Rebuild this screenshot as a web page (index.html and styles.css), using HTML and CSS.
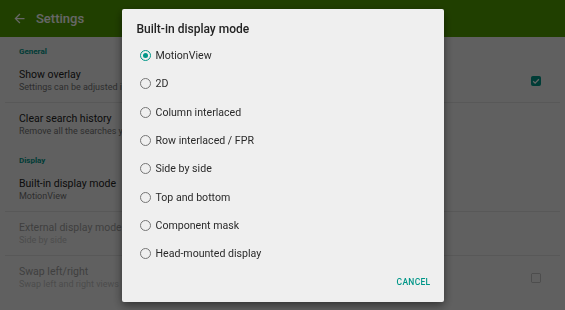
FILE: index.html
```html
<!DOCTYPE html>
<html lang="en">
<head>
    <meta charset="UTF-8">
    <meta name="viewport" content="width=device-width, initial-scale=1.0">
    <title>Settings</title>
    <link rel="stylesheet" href="styles.css">
</head>
<body>
    <header class="appbar">
        <svg class="back" viewBox="0 0 24 24" width="15" height="15">
            <path d="M20 11H7.83l5.59-5.59L12 4l-8 8 8 8 1.41-1.41L7.83 13H20v-2z" fill="currentColor"/>
        </svg>
        <span class="appbar-title">Settings</span>
    </header>

    <div class="list">
        <div class="section-header">General</div>
        <div class="row">
            <div class="row-text">
                <div class="row-title">Show overlay</div>
                <div class="row-summary">Settings can be adjusted in the viewer</div>
            </div>
            <span class="checkbox checked">
                <svg viewBox="0 0 10 10" width="10" height="10">
                    <path d="M2.2 5.2l1.9 1.9 3.8-3.9" fill="none" stroke="#fff" stroke-width="1.3"/>
                </svg>
            </span>
        </div>
        <div class="divider"></div>
        <div class="row">
            <div class="row-text">
                <div class="row-title">Clear search history</div>
                <div class="row-summary">Remove all the searches you have performed</div>
            </div>
        </div>

        <div class="section-header">Display</div>
        <div class="row">
            <div class="row-text">
                <div class="row-title">Built-in display mode</div>
                <div class="row-summary">MotionView</div>
            </div>
        </div>
        <div class="divider"></div>
        <div class="row disabled">
            <div class="row-text">
                <div class="row-title">External display mode</div>
                <div class="row-summary">Side by side</div>
            </div>
        </div>
        <div class="divider"></div>
        <div class="row disabled">
            <div class="row-text">
                <div class="row-title">Swap left/right</div>
                <div class="row-summary">Swap left and right views</div>
            </div>
            <span class="checkbox"></span>
        </div>
    </div>

    <div class="scrim">
        <div class="dialog">
            <h2 class="dialog-title">Built-in display mode</h2>
            <ul class="options">
                <li class="option selected"><span class="radio"></span>MotionView</li>
                <li class="option"><span class="radio"></span>2D</li>
                <li class="option"><span class="radio"></span>Column interlaced</li>
                <li class="option"><span class="radio"></span>Row interlaced / FPR</li>
                <li class="option"><span class="radio"></span>Side by side</li>
                <li class="option"><span class="radio"></span>Top and bottom</li>
                <li class="option"><span class="radio"></span>Component mask</li>
                <li class="option"><span class="radio"></span>Head-mounted display</li>
            </ul>
            <div class="dialog-actions">
                <button class="text-button">CANCEL</button>
            </div>
        </div>
    </div>
</body>
</html>
```

FILE: styles.css
```css
body {
    font-family: Roboto, "Liberation Sans", sans-serif;
    margin: 0;
    width: 565px;
    height: 310px;
    overflow: hidden;
    background-color: #f0f0f0;
    color: #222;
}

.appbar {
    height: 37px;
    background-color: #529f00;
    color: #fff;
    display: flex;
    align-items: center;
    padding-left: 12px;
    box-sizing: border-box;
}

.back {
    display: block;
}

.appbar-title {
    font-size: 13px;
    font-weight: 500;
    margin-left: 9px;
}

.list {
    margin: 0 5px;
}

.section-header {
    font-size: 8px;
    font-weight: 700;
    color: #009688;
    line-height: 14px;
    padding: 8px 14px 0;
}

.row {
    display: flex;
    align-items: center;
    padding: 9px 19px 8px 14px;
}

.row-text {
    flex: 1;
    min-width: 0;
}

.row-title {
    font-size: 10.5px;
    line-height: 13px;
    color: #222;
}

.row-summary {
    font-size: 9px;
    line-height: 13px;
    color: #737373;
    white-space: nowrap;
}

.row.disabled .row-text,
.row.disabled .checkbox {
    opacity: 0.4;
}

.divider {
    height: 1px;
    background-color: #dcdcdc;
}

.checkbox {
    width: 10px;
    height: 10px;
    border: 1.5px solid #777;
    border-radius: 1.5px;
    box-sizing: border-box;
    display: flex;
}

.checkbox.checked {
    background-color: #009688;
    border-color: #009688;
    align-items: center;
    justify-content: center;
}

.checkbox.checked svg {
    margin: -1.5px;
}

.scrim {
    position: fixed;
    inset: 0;
    background-color: rgba(0, 0, 0, 0.6);
    display: flex;
    align-items: center;
    justify-content: center;
}

.dialog {
    width: 322px;
    height: 293px;
    background-color: #efefef;
    border-radius: 2px;
    box-shadow: 0 3px 10px rgba(0, 0, 0, 0.5);
    padding-top: 10px;
    box-sizing: border-box;
    display: flex;
    flex-direction: column;
}

.dialog-title {
    font-size: 12px;
    font-weight: 500;
    line-height: 20px;
    margin: 0 0 3px;
    padding: 0 15px;
    color: #222;
}

.options {
    list-style: none;
    margin: 0;
    padding: 0;
}

.option {
    height: 28.3px;
    display: flex;
    align-items: center;
    padding-left: 18px;
    font-size: 10.6px;
    color: #2a2a2a;
}

.radio {
    width: 11px;
    height: 11px;
    border: 1.4px solid #767676;
    border-radius: 50%;
    box-sizing: border-box;
    margin-right: 5px;
    display: flex;
    align-items: center;
    justify-content: center;
}

.option.selected .radio {
    border-color: #009688;
}

.option.selected .radio::after {
    content: "";
    width: 5px;
    height: 5px;
    border-radius: 50%;
    background-color: #009688;
}

.dialog-actions {
    height: 28px;
    display: flex;
    align-items: center;
    justify-content: flex-end;
    padding-right: 13px;
}

.text-button {
    font-family: inherit;
    font-size: 8.5px;
    font-weight: 500;
    letter-spacing: 0.3px;
    color: #009688;
    background: none;
    border: none;
    padding: 0;
    cursor: pointer;
}
```
